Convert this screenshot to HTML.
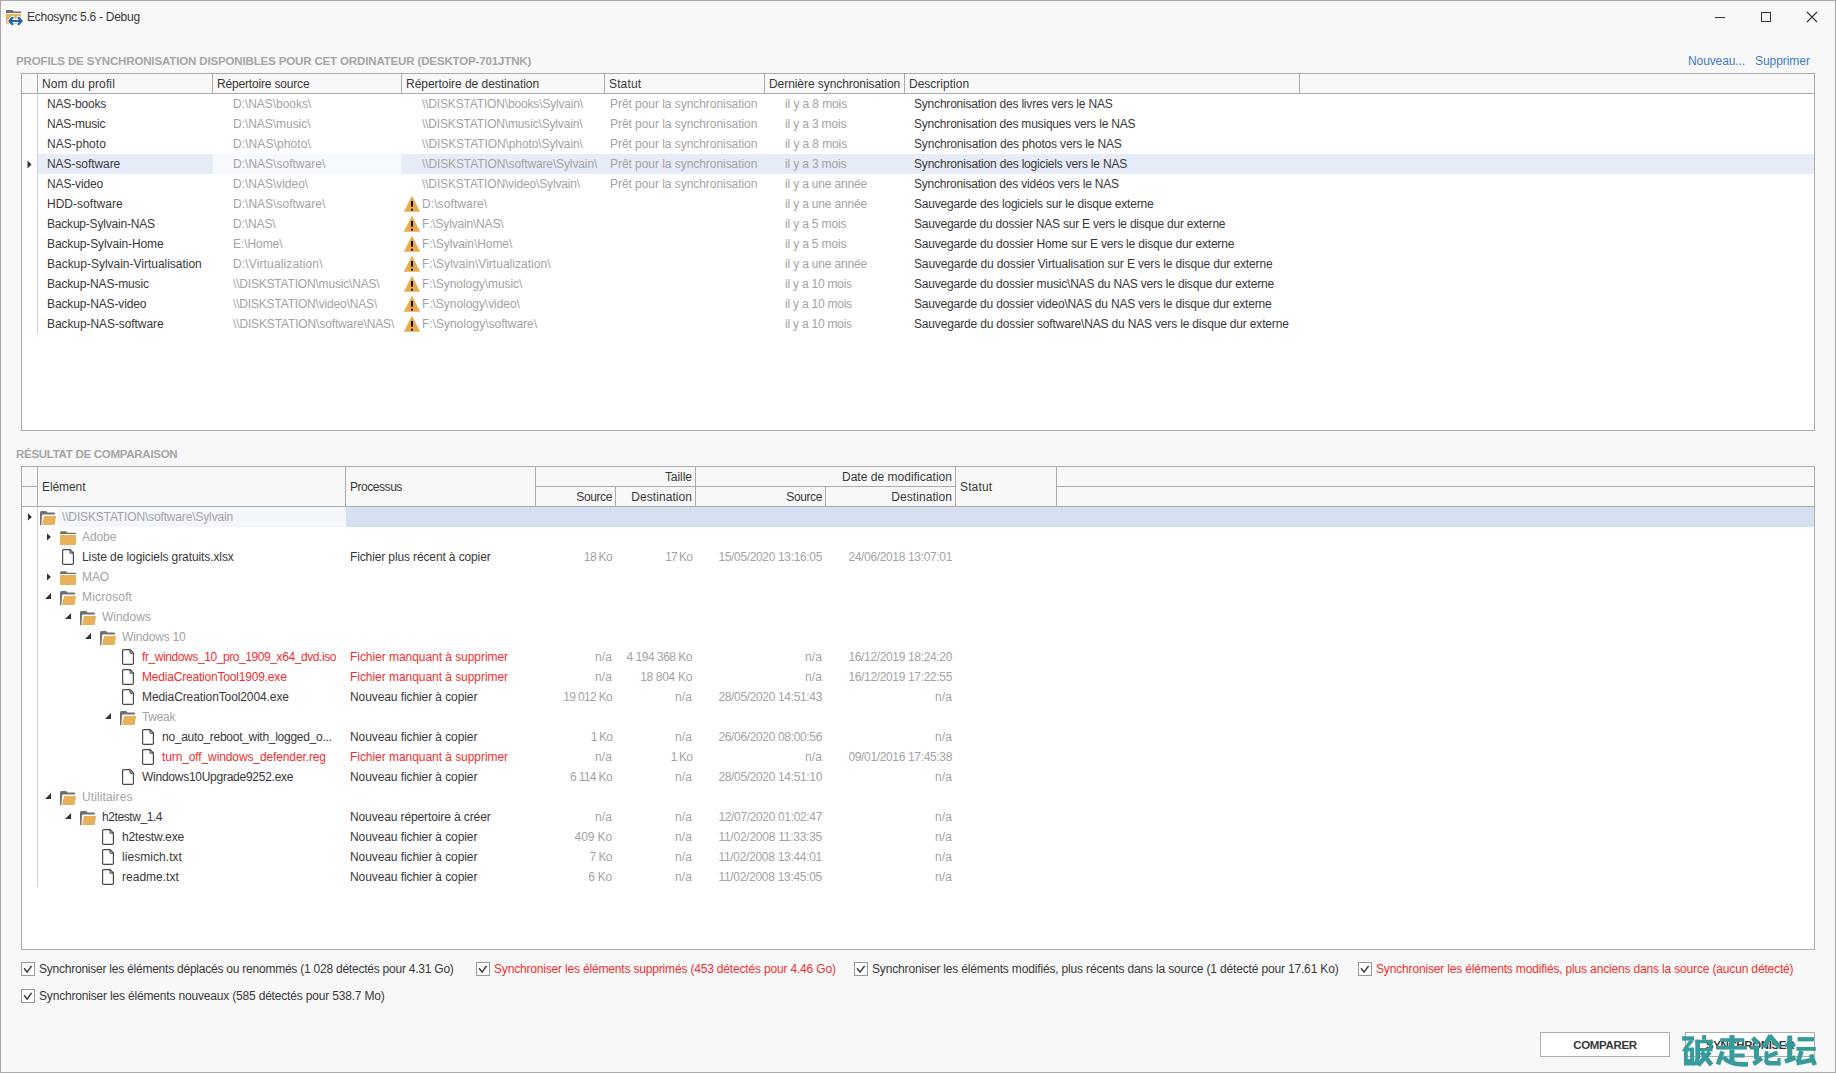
<!DOCTYPE html><html><head><meta charset="utf-8"><title>Echosync</title><style>
*{margin:0;padding:0;box-sizing:border-box}
html,body{width:1836px;height:1073px;overflow:hidden;background:#f8f8f8}
body{position:relative;font-family:"Liberation Sans",sans-serif;font-size:12px;color:#383838;letter-spacing:-0.2px}
.a{position:absolute}
.t{position:absolute;white-space:nowrap;line-height:20px;height:20px}
.g{color:#a3a3a3}
.r{color:#ef2f2f}
.hl{position:absolute;background:#a0a0a0}
.sec{position:absolute;white-space:nowrap;line-height:20px;font-size:11.5px;font-weight:bold;color:#a5a5a5;letter-spacing:-0.14px}
.lnk{color:#3d7cc9}
.rt{text-align:right}
</style></head><body><div class="a" style="left:0px;top:0px;width:1836px;height:1073px;border:1px solid #a8a8a8"></div>
<svg class="a" style="left:6px;top:9px" width="18" height="18" viewBox="0 0 18 18">
<path d="M0 1.6 Q0 1 0.8 1 H6.3 L7.6 2.6 H15 V4 H0z" fill="#6e6e6e"/>
<path d="M0 5 H15 V15 H2 Q0 15 0 13z" fill="#e9b05a"/>
<path d="M6.4 8.9 L3.4 12 L6.4 15.1 M12.6 8.9 L15.6 12 L12.6 15.1 M3.5 12 H15.5" fill="none" stroke="#fff" stroke-width="4" stroke-linecap="round" stroke-linejoin="round"/>
<path d="M6.4 8.9 L3.4 12 L6.4 15.1 M12.6 8.9 L15.6 12 L12.6 15.1" fill="none" stroke="#2063b0" stroke-width="2.3" stroke-linecap="round" stroke-linejoin="round"/>
<path d="M4 12 H15" stroke="#2063b0" stroke-width="2"/>
</svg>
<div class="t " style="left:27px;top:7px;letter-spacing:-0.264px;">Echosync 5.6 - Debug</div>
<svg class="a" style="left:1700px;top:0" width="136" height="40">
    <rect x="15" y="17" width="10" height="1" fill="#333"/>
    <rect x="61.5" y="12.5" width="9" height="9" fill="none" stroke="#333" stroke-width="1"/>
    <path d="M107 12 L117 22 M117 12 L107 22" stroke="#333" stroke-width="1.1"/>
    </svg>
<div class="sec" style="left:16px;top:51px">PROFILS DE SYNCHRONISATION DISPONIBLES POUR CET ORDINATEUR (DESKTOP-701JTNK)</div>
<div class="t lnk" style="left:1688px;top:51px;letter-spacing:-0.105px;">Nouveau...</div>
<div class="t lnk" style="left:1755px;top:51px;letter-spacing:-0.053px;">Supprimer</div>
<div class="a" style="left:21px;top:73px;width:1794px;height:358px;background:#fff;border:1px solid #ababab"></div>
<div class="a" style="left:22px;top:74px;width:1792px;height:19px;background:#f8f8f8"></div>
<div class="a" style="left:21px;top:93px;width:1794px;height:1px;background:#ababab"></div>
<div class="a" style="left:37px;top:74px;width:1px;height:19px;background:#ababab"></div>
<div class="a" style="left:212px;top:74px;width:1px;height:19px;background:#ababab"></div>
<div class="a" style="left:401px;top:74px;width:1px;height:19px;background:#ababab"></div>
<div class="a" style="left:604px;top:74px;width:1px;height:19px;background:#ababab"></div>
<div class="a" style="left:764px;top:74px;width:1px;height:19px;background:#ababab"></div>
<div class="a" style="left:904px;top:74px;width:1px;height:19px;background:#ababab"></div>
<div class="a" style="left:1299px;top:74px;width:1px;height:19px;background:#ababab"></div>
<div class="t " style="left:42px;top:74px;letter-spacing:0.122px;">Nom du profil</div>
<div class="t " style="left:217px;top:74px;letter-spacing:-0.175px;">Répertoire source</div>
<div class="t " style="left:406px;top:74px;letter-spacing:-0.038px;">Répertoire de destination</div>
<div class="t " style="left:609px;top:74px;letter-spacing:0.142px;">Statut</div>
<div class="t " style="left:769px;top:74px;letter-spacing:-0.066px;">Dernière synchronisation</div>
<div class="t " style="left:909px;top:74px;letter-spacing:0.007px;">Description</div>
<div class="t " style="left:47px;top:94px;letter-spacing:-0.181px;">NAS-books</div>
<div class="t g" style="left:233px;top:94px;width:162px;overflow:hidden;letter-spacing:-0.044px;">D:\NAS\books\</div>
<div class="t g" style="left:422px;top:94px;letter-spacing:-0.163px;">\\DISKSTATION\books\Sylvain\</div>
<div class="t g" style="left:610px;top:94px;letter-spacing:-0.049px;">Prêt pour la synchronisation</div>
<div class="t g" style="left:785px;top:94px;letter-spacing:-0.097px;">il y a 8 mois</div>
<div class="t " style="left:914px;top:94px;letter-spacing:-0.200px;">Synchronisation des livres vers le NAS</div>
<div class="t " style="left:47px;top:114px;letter-spacing:-0.176px;">NAS-music</div>
<div class="t g" style="left:233px;top:114px;width:162px;overflow:hidden;letter-spacing:-0.039px;">D:\NAS\music\</div>
<div class="t g" style="left:422px;top:114px;letter-spacing:-0.161px;">\\DISKSTATION\music\Sylvain\</div>
<div class="t g" style="left:610px;top:114px;letter-spacing:-0.049px;">Prêt pour la synchronisation</div>
<div class="t g" style="left:785px;top:114px;letter-spacing:-0.160px;">il y a 3 mois</div>
<div class="t " style="left:914px;top:114px;letter-spacing:-0.202px;">Synchronisation des musiques vers le NAS</div>
<div class="t " style="left:47px;top:134px;letter-spacing:0.014px;">NAS-photo</div>
<div class="t g" style="left:233px;top:134px;width:162px;overflow:hidden;letter-spacing:0.087px;">D:\NAS\photo\</div>
<div class="t g" style="left:422px;top:134px;letter-spacing:-0.102px;">\\DISKSTATION\photo\Sylvain\</div>
<div class="t g" style="left:610px;top:134px;letter-spacing:-0.049px;">Prêt pour la synchronisation</div>
<div class="t g" style="left:785px;top:134px;letter-spacing:-0.097px;">il y a 8 mois</div>
<div class="t " style="left:914px;top:134px;letter-spacing:-0.173px;">Synchronisation des photos vers le NAS</div>
<div class="a" style="left:38px;top:154px;width:175px;height:20px;background:#e6edf8"></div>
<div class="a" style="left:213px;top:154px;width:188px;height:20px;background:#f6f9fd"></div>
<div class="a" style="left:401px;top:154px;width:1413px;height:20px;background:#e6edf8"></div>
<svg class="a" style="left:27px;top:160px" width="6" height="9"><path d="M0.5 0.5 L4.5 4.5 L0.5 8.5z" fill="#333"/></svg>
<div class="t " style="left:47px;top:154px;letter-spacing:-0.069px;">NAS-software</div>
<div class="t g" style="left:233px;top:154px;width:162px;overflow:hidden;letter-spacing:0.014px;">D:\NAS\software\</div>
<div class="t g" style="left:422px;top:154px;letter-spacing:-0.122px;">\\DISKSTATION\software\Sylvain\</div>
<div class="t g" style="left:610px;top:154px;letter-spacing:-0.049px;">Prêt pour la synchronisation</div>
<div class="t g" style="left:785px;top:154px;letter-spacing:-0.160px;">il y a 3 mois</div>
<div class="t " style="left:914px;top:154px;letter-spacing:-0.188px;">Synchronisation des logiciels vers le NAS</div>
<div class="t " style="left:47px;top:174px;letter-spacing:-0.145px;">NAS-video</div>
<div class="t g" style="left:233px;top:174px;width:162px;overflow:hidden;letter-spacing:-0.020px;">D:\NAS\video\</div>
<div class="t g" style="left:422px;top:174px;letter-spacing:-0.152px;">\\DISKSTATION\video\Sylvain\</div>
<div class="t g" style="left:610px;top:174px;letter-spacing:-0.049px;">Prêt pour la synchronisation</div>
<div class="t g" style="left:785px;top:174px;letter-spacing:-0.175px;">il y a une année</div>
<div class="t " style="left:914px;top:174px;letter-spacing:-0.209px;">Synchronisation des vidéos vers le NAS</div>
<div class="t " style="left:47px;top:194px;letter-spacing:0.021px;">HDD-software</div>
<div class="t g" style="left:233px;top:194px;width:162px;overflow:hidden;letter-spacing:0.014px;">D:\NAS\software\</div>
<svg class="a" style="left:404px;top:196px" width="16" height="16" viewBox="0 0 16 16"><path d="M8 0.3 L15.8 15.6 L0.2 15.6z" fill="#e8ac4e" stroke="#e8ac4e" stroke-width="0.6" stroke-linejoin="round"/><rect x="7" y="5" width="2" height="5.6" fill="#111"/><rect x="7" y="12.8" width="2" height="1.8" fill="#111"/></svg>
<div class="t g" style="left:422px;top:194px;letter-spacing:0.096px;">D:\software\</div>
<div class="t g" style="left:785px;top:194px;letter-spacing:-0.175px;">il y a une année</div>
<div class="t " style="left:914px;top:194px;letter-spacing:-0.188px;">Sauvegarde des logiciels sur le disque externe</div>
<div class="t " style="left:47px;top:214px;letter-spacing:-0.200px;">Backup-Sylvain-NAS</div>
<div class="t g" style="left:233px;top:214px;width:162px;overflow:hidden;letter-spacing:-0.117px;">D:\NAS\</div>
<svg class="a" style="left:404px;top:216px" width="16" height="16" viewBox="0 0 16 16"><path d="M8 0.3 L15.8 15.6 L0.2 15.6z" fill="#e8ac4e" stroke="#e8ac4e" stroke-width="0.6" stroke-linejoin="round"/><rect x="7" y="5" width="2" height="5.6" fill="#111"/><rect x="7" y="12.8" width="2" height="1.8" fill="#111"/></svg>
<div class="t g" style="left:422px;top:214px;letter-spacing:-0.172px;">F:\Sylvain\NAS\</div>
<div class="t g" style="left:785px;top:214px;letter-spacing:-0.162px;">il y a 5 mois</div>
<div class="t " style="left:914px;top:214px;letter-spacing:-0.222px;">Sauvegarde du dossier NAS sur E vers le disque dur externe</div>
<div class="t " style="left:47px;top:234px;letter-spacing:-0.113px;">Backup-Sylvain-Home</div>
<div class="t g" style="left:233px;top:234px;width:162px;overflow:hidden;letter-spacing:-0.064px;">E:\Home\</div>
<svg class="a" style="left:404px;top:236px" width="16" height="16" viewBox="0 0 16 16"><path d="M8 0.3 L15.8 15.6 L0.2 15.6z" fill="#e8ac4e" stroke="#e8ac4e" stroke-width="0.6" stroke-linejoin="round"/><rect x="7" y="5" width="2" height="5.6" fill="#111"/><rect x="7" y="12.8" width="2" height="1.8" fill="#111"/></svg>
<div class="t g" style="left:422px;top:234px;letter-spacing:-0.073px;">F:\Sylvain\Home\</div>
<div class="t g" style="left:785px;top:234px;letter-spacing:-0.162px;">il y a 5 mois</div>
<div class="t " style="left:914px;top:234px;letter-spacing:-0.193px;">Sauvegarde du dossier Home sur E vers le disque dur externe</div>
<div class="t " style="left:47px;top:254px;letter-spacing:-0.014px;">Backup-Sylvain-Virtualisation</div>
<div class="t g" style="left:233px;top:254px;width:162px;overflow:hidden;letter-spacing:0.138px;">D:\Virtualization\</div>
<svg class="a" style="left:404px;top:256px" width="16" height="16" viewBox="0 0 16 16"><path d="M8 0.3 L15.8 15.6 L0.2 15.6z" fill="#e8ac4e" stroke="#e8ac4e" stroke-width="0.6" stroke-linejoin="round"/><rect x="7" y="5" width="2" height="5.6" fill="#111"/><rect x="7" y="12.8" width="2" height="1.8" fill="#111"/></svg>
<div class="t g" style="left:422px;top:254px;letter-spacing:0.028px;">F:\Sylvain\Virtualization\</div>
<div class="t g" style="left:785px;top:254px;letter-spacing:-0.175px;">il y a une année</div>
<div class="t " style="left:914px;top:254px;letter-spacing:-0.138px;">Sauvegarde du dossier Virtualisation sur E vers le disque dur externe</div>
<div class="t " style="left:47px;top:274px;letter-spacing:-0.140px;">Backup-NAS-music</div>
<div class="t g" style="left:233px;top:274px;width:162px;overflow:hidden;letter-spacing:-0.187px;">\\DISKSTATION\music\NAS\</div>
<svg class="a" style="left:404px;top:276px" width="16" height="16" viewBox="0 0 16 16"><path d="M8 0.3 L15.8 15.6 L0.2 15.6z" fill="#e8ac4e" stroke="#e8ac4e" stroke-width="0.6" stroke-linejoin="round"/><rect x="7" y="5" width="2" height="5.6" fill="#111"/><rect x="7" y="12.8" width="2" height="1.8" fill="#111"/></svg>
<div class="t g" style="left:422px;top:274px;letter-spacing:-0.060px;">F:\Synology\music\</div>
<div class="t g" style="left:785px;top:274px;letter-spacing:-0.225px;">il y a 10 mois</div>
<div class="t " style="left:914px;top:274px;letter-spacing:-0.189px;">Sauvegarde du dossier music\NAS du NAS vers le disque dur externe</div>
<div class="t " style="left:47px;top:294px;letter-spacing:-0.123px;">Backup-NAS-video</div>
<div class="t g" style="left:233px;top:294px;width:162px;overflow:hidden;letter-spacing:-0.176px;">\\DISKSTATION\video\NAS\</div>
<svg class="a" style="left:404px;top:296px" width="16" height="16" viewBox="0 0 16 16"><path d="M8 0.3 L15.8 15.6 L0.2 15.6z" fill="#e8ac4e" stroke="#e8ac4e" stroke-width="0.6" stroke-linejoin="round"/><rect x="7" y="5" width="2" height="5.6" fill="#111"/><rect x="7" y="12.8" width="2" height="1.8" fill="#111"/></svg>
<div class="t g" style="left:422px;top:294px;letter-spacing:-0.045px;">F:\Synology\video\</div>
<div class="t g" style="left:785px;top:294px;letter-spacing:-0.225px;">il y a 10 mois</div>
<div class="t " style="left:914px;top:294px;letter-spacing:-0.185px;">Sauvegarde du dossier video\NAS du NAS vers le disque dur externe</div>
<div class="t " style="left:47px;top:314px;letter-spacing:-0.078px;">Backup-NAS-software</div>
<div class="t g" style="left:233px;top:314px;width:162px;overflow:hidden;letter-spacing:-0.139px;">\\DISKSTATION\software\NAS\</div>
<svg class="a" style="left:404px;top:316px" width="16" height="16" viewBox="0 0 16 16"><path d="M8 0.3 L15.8 15.6 L0.2 15.6z" fill="#e8ac4e" stroke="#e8ac4e" stroke-width="0.6" stroke-linejoin="round"/><rect x="7" y="5" width="2" height="5.6" fill="#111"/><rect x="7" y="12.8" width="2" height="1.8" fill="#111"/></svg>
<div class="t g" style="left:422px;top:314px;letter-spacing:-0.017px;">F:\Synology\software\</div>
<div class="t g" style="left:785px;top:314px;letter-spacing:-0.225px;">il y a 10 mois</div>
<div class="t " style="left:914px;top:314px;letter-spacing:-0.170px;">Sauvegarde du dossier software\NAS du NAS vers le disque dur externe</div>
<div class="a" style="left:37px;top:94px;width:1px;height:240px;background:#d4d4d4"></div>
<div class="sec" style="left:16px;top:444px;letter-spacing:-0.28px">RÉSULTAT DE COMPARAISON</div>
<div class="a" style="left:21px;top:466px;width:1794px;height:484px;background:#fff;border:1px solid #ababab"></div>
<div class="a" style="left:22px;top:467px;width:1792px;height:39px;background:#f8f8f8"></div>
<div class="a" style="left:21px;top:506px;width:1794px;height:1px;background:#ababab"></div>
<div class="a" style="left:37px;top:467px;width:1px;height:39px;background:#ababab"></div>
<div class="a" style="left:345px;top:467px;width:1px;height:39px;background:#ababab"></div>
<div class="a" style="left:535px;top:467px;width:1px;height:39px;background:#ababab"></div>
<div class="a" style="left:695px;top:467px;width:1px;height:39px;background:#ababab"></div>
<div class="a" style="left:955px;top:467px;width:1px;height:39px;background:#ababab"></div>
<div class="a" style="left:1056px;top:467px;width:1px;height:39px;background:#ababab"></div>
<div class="a" style="left:615px;top:487px;width:1px;height:19px;background:#ababab"></div>
<div class="a" style="left:825px;top:487px;width:1px;height:19px;background:#ababab"></div>
<div class="a" style="left:22px;top:486px;width:15px;height:1px;background:#ababab"></div>
<div class="a" style="left:535px;top:486px;width:421px;height:1px;background:#ababab"></div>
<div class="a" style="left:1056px;top:486px;width:759px;height:1px;background:#ababab"></div>
<div class="t " style="left:42px;top:477px;letter-spacing:-0.090px;">Elément</div>
<div class="t " style="left:350px;top:477px;letter-spacing:-0.458px;">Processus</div>
<div class="t " style="left:960px;top:477px;letter-spacing:0.142px;">Statut</div>
<div class="t rt " style="left:392px;width:300px;top:467px;letter-spacing:-0.040px;">Taille</div>
<div class="t rt " style="left:652px;width:300px;top:467px;letter-spacing:0.032px;">Date de modification</div>
<div class="t rt " style="left:312px;width:300px;top:487px;letter-spacing:-0.387px;">Source</div>
<div class="t rt " style="left:392px;width:300px;top:487px;letter-spacing:0.066px;">Destination</div>
<div class="t rt " style="left:522px;width:300px;top:487px;letter-spacing:-0.387px;">Source</div>
<div class="t rt " style="left:652px;width:300px;top:487px;letter-spacing:0.066px;">Destination</div>
<div class="a" style="left:58px;top:507px;width:288px;height:20px;background:#f3f6fb"></div>
<div class="a" style="left:346px;top:507px;width:1468px;height:20px;background:#d5e0f2"></div>
<svg class="a" style="left:28px;top:513px" width="5" height="9"><path d="M0 0.2 L3.9 3.9 L0 7.6z" fill="#333"/></svg>
<svg class="a" style="left:40px;top:511px" width="17" height="15" viewBox="0 0 17 15"><path d="M0 1.6 Q0 0 1.6 0 H6 L7.6 1.6 H14.2 Q15 1.6 15 2.5 V3.6 H3 Q2.2 3.6 2.1 4.5 L1.3 14.2 H0 z" fill="#707070"/><path d="M3.9 5 H16 L14.7 14 H2 z" fill="#e9b05a"/></svg>
<div class="t g" style="left:62px;top:507px;letter-spacing:-0.152px;">\\DISKSTATION\software\Sylvain</div>
<svg class="a" style="left:47px;top:533px" width="5" height="9"><path d="M0 0.2 L3.9 3.9 L0 7.6z" fill="#333"/></svg>
<svg class="a" style="left:60px;top:531px" width="17" height="15" viewBox="0 0 17 15"><path d="M0 2 Q0 0.3 1.5 0.3 H6 L7.5 1.7 H16 V3 H0z" fill="#707070"/><path d="M0 4 H16 V13.2 Q16 14 15.2 14 H1 Q0 14 0 13z" fill="#e9b05a"/></svg>
<div class="t g" style="left:82px;top:527px;letter-spacing:-0.093px;">Adobe</div>
<svg class="a" style="left:62px;top:549px" width="12" height="16" viewBox="0 0 12 16"><path d="M0.6 1.8 Q0.6 0.6 1.8 0.6 H8.2 L11.4 3.9 V14.2 Q11.4 15.4 10.2 15.4 H1.8 Q0.6 15.4 0.6 14.2 Z" fill="#fff" stroke="#4a4a4a" stroke-width="1.2"/><path d="M8 0.8 V3 Q8 4.1 9.1 4.1 H11.2" fill="none" stroke="#4a4a4a" stroke-width="1.2"/></svg>
<div class="t " style="left:82px;top:547px;letter-spacing:-0.093px;">Liste de logiciels gratuits.xlsx</div>
<div class="t " style="left:350px;top:547px;letter-spacing:-0.125px;">Fichier plus récent à copier</div>
<div class="t rt g" style="left:312px;width:300px;top:547px;letter-spacing:-0.646px;">18 Ko</div>
<div class="t rt g" style="left:392px;width:300px;top:547px;letter-spacing:-0.897px;">17 Ko</div>
<div class="t rt g" style="left:522px;width:300px;top:547px;letter-spacing:-0.343px;">15/05/2020 13:16:05</div>
<div class="t rt g" style="left:652px;width:300px;top:547px;letter-spacing:-0.343px;">24/06/2018 13:07:01</div>
<svg class="a" style="left:47px;top:573px" width="5" height="9"><path d="M0 0.2 L3.9 3.9 L0 7.6z" fill="#333"/></svg>
<svg class="a" style="left:60px;top:571px" width="17" height="15" viewBox="0 0 17 15"><path d="M0 2 Q0 0.3 1.5 0.3 H6 L7.5 1.7 H16 V3 H0z" fill="#707070"/><path d="M0 4 H16 V13.2 Q16 14 15.2 14 H1 Q0 14 0 13z" fill="#e9b05a"/></svg>
<div class="t g" style="left:82px;top:567px;letter-spacing:-0.107px;">MAO</div>
<svg class="a" style="left:45px;top:593px" width="7" height="7"><path d="M6 0 V6 H0z" fill="#333"/></svg>
<svg class="a" style="left:60px;top:591px" width="17" height="15" viewBox="0 0 17 15"><path d="M0 1.6 Q0 0 1.6 0 H6 L7.6 1.6 H14.2 Q15 1.6 15 2.5 V3.6 H3 Q2.2 3.6 2.1 4.5 L1.3 14.2 H0 z" fill="#707070"/><path d="M3.9 5 H16 L14.7 14 H2 z" fill="#e9b05a"/></svg>
<div class="t g" style="left:82px;top:587px;letter-spacing:0.160px;">Microsoft</div>
<svg class="a" style="left:65px;top:613px" width="7" height="7"><path d="M6 0 V6 H0z" fill="#333"/></svg>
<svg class="a" style="left:80px;top:611px" width="17" height="15" viewBox="0 0 17 15"><path d="M0 1.6 Q0 0 1.6 0 H6 L7.6 1.6 H14.2 Q15 1.6 15 2.5 V3.6 H3 Q2.2 3.6 2.1 4.5 L1.3 14.2 H0 z" fill="#707070"/><path d="M3.9 5 H16 L14.7 14 H2 z" fill="#e9b05a"/></svg>
<div class="t g" style="left:102px;top:607px;letter-spacing:0.036px;">Windows</div>
<svg class="a" style="left:85px;top:633px" width="7" height="7"><path d="M6 0 V6 H0z" fill="#333"/></svg>
<svg class="a" style="left:100px;top:631px" width="17" height="15" viewBox="0 0 17 15"><path d="M0 1.6 Q0 0 1.6 0 H6 L7.6 1.6 H14.2 Q15 1.6 15 2.5 V3.6 H3 Q2.2 3.6 2.1 4.5 L1.3 14.2 H0 z" fill="#707070"/><path d="M3.9 5 H16 L14.7 14 H2 z" fill="#e9b05a"/></svg>
<div class="t g" style="left:122px;top:627px;letter-spacing:-0.174px;">Windows 10</div>
<svg class="a" style="left:122px;top:649px" width="12" height="16" viewBox="0 0 12 16"><path d="M0.6 1.8 Q0.6 0.6 1.8 0.6 H8.2 L11.4 3.9 V14.2 Q11.4 15.4 10.2 15.4 H1.8 Q0.6 15.4 0.6 14.2 Z" fill="#fff" stroke="#4a4a4a" stroke-width="1.2"/><path d="M8 0.8 V3 Q8 4.1 9.1 4.1 H11.2" fill="none" stroke="#4a4a4a" stroke-width="1.2"/></svg>
<div class="t r" style="left:142px;top:647px;letter-spacing:-0.414px;">fr_windows_10_pro_1909_x64_dvd.iso</div>
<div class="t r" style="left:350px;top:647px;letter-spacing:-0.048px;">Fichier manquant à supprimer</div>
<div class="t rt g" style="left:312px;width:300px;top:647px;letter-spacing:0.113px;">n/a</div>
<div class="t rt g" style="left:392px;width:300px;top:647px;letter-spacing:-0.501px;">4 194 368 Ko</div>
<div class="t rt g" style="left:522px;width:300px;top:647px;letter-spacing:0.113px;">n/a</div>
<div class="t rt g" style="left:652px;width:300px;top:647px;letter-spacing:-0.343px;">16/12/2019 18:24:20</div>
<svg class="a" style="left:122px;top:669px" width="12" height="16" viewBox="0 0 12 16"><path d="M0.6 1.8 Q0.6 0.6 1.8 0.6 H8.2 L11.4 3.9 V14.2 Q11.4 15.4 10.2 15.4 H1.8 Q0.6 15.4 0.6 14.2 Z" fill="#fff" stroke="#4a4a4a" stroke-width="1.2"/><path d="M8 0.8 V3 Q8 4.1 9.1 4.1 H11.2" fill="none" stroke="#4a4a4a" stroke-width="1.2"/></svg>
<div class="t r" style="left:142px;top:667px;letter-spacing:-0.193px;">MediaCreationTool1909.exe</div>
<div class="t r" style="left:350px;top:667px;letter-spacing:-0.048px;">Fichier manquant à supprimer</div>
<div class="t rt g" style="left:312px;width:300px;top:667px;letter-spacing:0.113px;">n/a</div>
<div class="t rt g" style="left:392px;width:300px;top:667px;letter-spacing:-0.316px;">18 804 Ko</div>
<div class="t rt g" style="left:522px;width:300px;top:667px;letter-spacing:0.113px;">n/a</div>
<div class="t rt g" style="left:652px;width:300px;top:667px;letter-spacing:-0.343px;">16/12/2019 17:22:55</div>
<svg class="a" style="left:122px;top:689px" width="12" height="16" viewBox="0 0 12 16"><path d="M0.6 1.8 Q0.6 0.6 1.8 0.6 H8.2 L11.4 3.9 V14.2 Q11.4 15.4 10.2 15.4 H1.8 Q0.6 15.4 0.6 14.2 Z" fill="#fff" stroke="#4a4a4a" stroke-width="1.2"/><path d="M8 0.8 V3 Q8 4.1 9.1 4.1 H11.2" fill="none" stroke="#4a4a4a" stroke-width="1.2"/></svg>
<div class="t " style="left:142px;top:687px;letter-spacing:-0.103px;">MediaCreationTool2004.exe</div>
<div class="t " style="left:350px;top:687px;letter-spacing:-0.087px;">Nouveau fichier à copier</div>
<div class="t rt g" style="left:312px;width:300px;top:687px;letter-spacing:-0.666px;">19 012 Ko</div>
<div class="t rt g" style="left:392px;width:300px;top:687px;letter-spacing:0.113px;">n/a</div>
<div class="t rt g" style="left:522px;width:300px;top:687px;letter-spacing:-0.343px;">28/05/2020 14:51:43</div>
<div class="t rt g" style="left:652px;width:300px;top:687px;letter-spacing:0.113px;">n/a</div>
<svg class="a" style="left:105px;top:713px" width="7" height="7"><path d="M6 0 V6 H0z" fill="#333"/></svg>
<svg class="a" style="left:120px;top:711px" width="17" height="15" viewBox="0 0 17 15"><path d="M0 1.6 Q0 0 1.6 0 H6 L7.6 1.6 H14.2 Q15 1.6 15 2.5 V3.6 H3 Q2.2 3.6 2.1 4.5 L1.3 14.2 H0 z" fill="#707070"/><path d="M3.9 5 H16 L14.7 14 H2 z" fill="#e9b05a"/></svg>
<div class="t g" style="left:142px;top:707px;letter-spacing:-0.310px;">Tweak</div>
<svg class="a" style="left:142px;top:729px" width="12" height="16" viewBox="0 0 12 16"><path d="M0.6 1.8 Q0.6 0.6 1.8 0.6 H8.2 L11.4 3.9 V14.2 Q11.4 15.4 10.2 15.4 H1.8 Q0.6 15.4 0.6 14.2 Z" fill="#fff" stroke="#4a4a4a" stroke-width="1.2"/><path d="M8 0.8 V3 Q8 4.1 9.1 4.1 H11.2" fill="none" stroke="#4a4a4a" stroke-width="1.2"/></svg>
<div class="t " style="left:162px;top:727px;letter-spacing:-0.277px;">no_auto_reboot_with_logged_o...</div>
<div class="t " style="left:350px;top:727px;letter-spacing:-0.087px;">Nouveau fichier à copier</div>
<div class="t rt g" style="left:312px;width:300px;top:727px;letter-spacing:-0.860px;">1 Ko</div>
<div class="t rt g" style="left:392px;width:300px;top:727px;letter-spacing:0.113px;">n/a</div>
<div class="t rt g" style="left:522px;width:300px;top:727px;letter-spacing:-0.343px;">26/06/2020 08:00:56</div>
<div class="t rt g" style="left:652px;width:300px;top:727px;letter-spacing:0.113px;">n/a</div>
<svg class="a" style="left:142px;top:749px" width="12" height="16" viewBox="0 0 12 16"><path d="M0.6 1.8 Q0.6 0.6 1.8 0.6 H8.2 L11.4 3.9 V14.2 Q11.4 15.4 10.2 15.4 H1.8 Q0.6 15.4 0.6 14.2 Z" fill="#fff" stroke="#4a4a4a" stroke-width="1.2"/><path d="M8 0.8 V3 Q8 4.1 9.1 4.1 H11.2" fill="none" stroke="#4a4a4a" stroke-width="1.2"/></svg>
<div class="t r" style="left:162px;top:747px;letter-spacing:-0.115px;">turn_off_windows_defender.reg</div>
<div class="t r" style="left:350px;top:747px;letter-spacing:-0.048px;">Fichier manquant à supprimer</div>
<div class="t rt g" style="left:312px;width:300px;top:747px;letter-spacing:0.113px;">n/a</div>
<div class="t rt g" style="left:392px;width:300px;top:747px;letter-spacing:-0.860px;">1 Ko</div>
<div class="t rt g" style="left:522px;width:300px;top:747px;letter-spacing:0.113px;">n/a</div>
<div class="t rt g" style="left:652px;width:300px;top:747px;letter-spacing:-0.343px;">09/01/2016 17:45:38</div>
<svg class="a" style="left:122px;top:769px" width="12" height="16" viewBox="0 0 12 16"><path d="M0.6 1.8 Q0.6 0.6 1.8 0.6 H8.2 L11.4 3.9 V14.2 Q11.4 15.4 10.2 15.4 H1.8 Q0.6 15.4 0.6 14.2 Z" fill="#fff" stroke="#4a4a4a" stroke-width="1.2"/><path d="M8 0.8 V3 Q8 4.1 9.1 4.1 H11.2" fill="none" stroke="#4a4a4a" stroke-width="1.2"/></svg>
<div class="t " style="left:142px;top:767px;letter-spacing:-0.257px;">Windows10Upgrade9252.exe</div>
<div class="t " style="left:350px;top:767px;letter-spacing:-0.087px;">Nouveau fichier à copier</div>
<div class="t rt g" style="left:312px;width:300px;top:767px;letter-spacing:-0.637px;">6 114 Ko</div>
<div class="t rt g" style="left:392px;width:300px;top:767px;letter-spacing:0.113px;">n/a</div>
<div class="t rt g" style="left:522px;width:300px;top:767px;letter-spacing:-0.343px;">28/05/2020 14:51:10</div>
<div class="t rt g" style="left:652px;width:300px;top:767px;letter-spacing:0.113px;">n/a</div>
<svg class="a" style="left:45px;top:793px" width="7" height="7"><path d="M6 0 V6 H0z" fill="#333"/></svg>
<svg class="a" style="left:60px;top:791px" width="17" height="15" viewBox="0 0 17 15"><path d="M0 1.6 Q0 0 1.6 0 H6 L7.6 1.6 H14.2 Q15 1.6 15 2.5 V3.6 H3 Q2.2 3.6 2.1 4.5 L1.3 14.2 H0 z" fill="#707070"/><path d="M3.9 5 H16 L14.7 14 H2 z" fill="#e9b05a"/></svg>
<div class="t g" style="left:82px;top:787px;letter-spacing:0.114px;">Utilitaires</div>
<svg class="a" style="left:65px;top:813px" width="7" height="7"><path d="M6 0 V6 H0z" fill="#333"/></svg>
<svg class="a" style="left:80px;top:811px" width="17" height="15" viewBox="0 0 17 15"><path d="M0 1.6 Q0 0 1.6 0 H6 L7.6 1.6 H14.2 Q15 1.6 15 2.5 V3.6 H3 Q2.2 3.6 2.1 4.5 L1.3 14.2 H0 z" fill="#707070"/><path d="M3.9 5 H16 L14.7 14 H2 z" fill="#e9b05a"/></svg>
<div class="t " style="left:102px;top:807px;letter-spacing:-0.424px;">h2testw_1.4</div>
<div class="t " style="left:350px;top:807px;letter-spacing:-0.108px;">Nouveau répertoire à créer</div>
<div class="t rt g" style="left:312px;width:300px;top:807px;letter-spacing:0.113px;">n/a</div>
<div class="t rt g" style="left:392px;width:300px;top:807px;letter-spacing:0.113px;">n/a</div>
<div class="t rt g" style="left:522px;width:300px;top:807px;letter-spacing:-0.343px;">12/07/2020 01:02:47</div>
<div class="t rt g" style="left:652px;width:300px;top:807px;letter-spacing:0.113px;">n/a</div>
<svg class="a" style="left:102px;top:829px" width="12" height="16" viewBox="0 0 12 16"><path d="M0.6 1.8 Q0.6 0.6 1.8 0.6 H8.2 L11.4 3.9 V14.2 Q11.4 15.4 10.2 15.4 H1.8 Q0.6 15.4 0.6 14.2 Z" fill="#fff" stroke="#4a4a4a" stroke-width="1.2"/><path d="M8 0.8 V3 Q8 4.1 9.1 4.1 H11.2" fill="none" stroke="#4a4a4a" stroke-width="1.2"/></svg>
<div class="t " style="left:122px;top:827px;letter-spacing:-0.113px;">h2testw.exe</div>
<div class="t " style="left:350px;top:827px;letter-spacing:-0.087px;">Nouveau fichier à copier</div>
<div class="t rt g" style="left:312px;width:300px;top:827px;letter-spacing:-0.108px;">409 Ko</div>
<div class="t rt g" style="left:392px;width:300px;top:827px;letter-spacing:0.113px;">n/a</div>
<div class="t rt g" style="left:522px;width:300px;top:827px;letter-spacing:-0.249px;">11/02/2008 11:33:35</div>
<div class="t rt g" style="left:652px;width:300px;top:827px;letter-spacing:0.113px;">n/a</div>
<svg class="a" style="left:102px;top:849px" width="12" height="16" viewBox="0 0 12 16"><path d="M0.6 1.8 Q0.6 0.6 1.8 0.6 H8.2 L11.4 3.9 V14.2 Q11.4 15.4 10.2 15.4 H1.8 Q0.6 15.4 0.6 14.2 Z" fill="#fff" stroke="#4a4a4a" stroke-width="1.2"/><path d="M8 0.8 V3 Q8 4.1 9.1 4.1 H11.2" fill="none" stroke="#4a4a4a" stroke-width="1.2"/></svg>
<div class="t " style="left:122px;top:847px;letter-spacing:0.055px;">liesmich.txt</div>
<div class="t " style="left:350px;top:847px;letter-spacing:-0.087px;">Nouveau fichier à copier</div>
<div class="t rt g" style="left:312px;width:300px;top:847px;letter-spacing:-0.548px;">7 Ko</div>
<div class="t rt g" style="left:392px;width:300px;top:847px;letter-spacing:0.113px;">n/a</div>
<div class="t rt g" style="left:522px;width:300px;top:847px;letter-spacing:-0.296px;">11/02/2008 13:44:01</div>
<div class="t rt g" style="left:652px;width:300px;top:847px;letter-spacing:0.113px;">n/a</div>
<svg class="a" style="left:102px;top:869px" width="12" height="16" viewBox="0 0 12 16"><path d="M0.6 1.8 Q0.6 0.6 1.8 0.6 H8.2 L11.4 3.9 V14.2 Q11.4 15.4 10.2 15.4 H1.8 Q0.6 15.4 0.6 14.2 Z" fill="#fff" stroke="#4a4a4a" stroke-width="1.2"/><path d="M8 0.8 V3 Q8 4.1 9.1 4.1 H11.2" fill="none" stroke="#4a4a4a" stroke-width="1.2"/></svg>
<div class="t " style="left:122px;top:867px;letter-spacing:0.013px;">readme.txt</div>
<div class="t " style="left:350px;top:867px;letter-spacing:-0.087px;">Nouveau fichier à copier</div>
<div class="t rt g" style="left:312px;width:300px;top:867px;letter-spacing:-0.264px;">6 Ko</div>
<div class="t rt g" style="left:392px;width:300px;top:867px;letter-spacing:0.113px;">n/a</div>
<div class="t rt g" style="left:522px;width:300px;top:867px;letter-spacing:-0.296px;">11/02/2008 13:45:05</div>
<div class="t rt g" style="left:652px;width:300px;top:867px;letter-spacing:0.113px;">n/a</div>
<div class="a" style="left:37px;top:507px;width:1px;height:380px;background:#d4d4d4"></div>
<svg class="a" style="left:21px;top:962px" width="14" height="14"><rect x="0.5" y="0.5" width="13" height="13" fill="#fff" stroke="#999"/><path d="M3.1 6.2 L6.1 10.1 L10.6 3.9" fill="none" stroke="#383838" stroke-width="1.5"/></svg>
<div class="t " style="left:39px;top:959px;letter-spacing:-0.232px;">Synchroniser les éléments déplacés ou renommés (1 028 détectés pour 4.31 Go)</div>
<svg class="a" style="left:476px;top:962px" width="14" height="14"><rect x="0.5" y="0.5" width="13" height="13" fill="#fff" stroke="#999"/><path d="M3.1 6.2 L6.1 10.1 L10.6 3.9" fill="none" stroke="#383838" stroke-width="1.5"/></svg>
<div class="t r" style="left:494px;top:959px;letter-spacing:-0.177px;">Synchroniser les éléments supprimés (453 détectés pour 4.46 Go)</div>
<svg class="a" style="left:854px;top:962px" width="14" height="14"><rect x="0.5" y="0.5" width="13" height="13" fill="#fff" stroke="#999"/><path d="M3.1 6.2 L6.1 10.1 L10.6 3.9" fill="none" stroke="#383838" stroke-width="1.5"/></svg>
<div class="t " style="left:872px;top:959px;letter-spacing:-0.162px;">Synchroniser les éléments modifiés, plus récents dans la source (1 détecté pour 17.61 Ko)</div>
<svg class="a" style="left:1358px;top:962px" width="14" height="14"><rect x="0.5" y="0.5" width="13" height="13" fill="#fff" stroke="#999"/><path d="M3.1 6.2 L6.1 10.1 L10.6 3.9" fill="none" stroke="#383838" stroke-width="1.5"/></svg>
<div class="t r" style="left:1376px;top:959px;letter-spacing:-0.162px;">Synchroniser les éléments modifiés, plus anciens dans la source (aucun détecté)</div>
<svg class="a" style="left:21px;top:989px" width="14" height="14"><rect x="0.5" y="0.5" width="13" height="13" fill="#fff" stroke="#999"/><path d="M3.1 6.2 L6.1 10.1 L10.6 3.9" fill="none" stroke="#383838" stroke-width="1.5"/></svg>
<div class="t " style="left:39px;top:986px;letter-spacing:-0.179px;">Synchroniser les éléments nouveaux (585 détectés pour 538.7 Mo)</div>
<div class="a" style="left:1540px;top:1032px;width:130px;height:25px;background:#fff;border:1px solid #adadad"></div>
<div class="t" style="left:1540px;top:1035px;width:130px;text-align:center;font-weight:bold;font-size:11.5px;letter-spacing:-0.37px">COMPARER</div>
<div class="a" style="left:1685px;top:1032px;width:130px;height:25px;background:#fff;border:1px solid #adadad"></div>
<div class="t" style="left:1685px;top:1035px;width:130px;text-align:center;font-weight:bold;font-size:11.5px;letter-spacing:-0.37px">SYNCHRONISER</div>
<svg class="a" style="left:1678px;top:1030px" width="144" height="42" viewBox="0 0 144 42"><g fill="#389b9b">
<rect x="4.1" y="6.3" width="12" height="4.3"/>
<polygon points="11,10.6 16,10.6 8.5,20 3.5,21.6"/>
<path fill-rule="evenodd" d="M5.9 17.6H16.1V35.5H5.9z M9.8 21.4V29H12V21.4z"/>
<polygon points="17.3,9.8 22,9.8 22,28 19.5,35.5 14.9,35.3 17.3,29"/>
<rect x="24.1" y="5.1" width="4.1" height="4.7"/>
<rect x="17.3" y="9.8" width="17.2" height="3.5"/>
<rect x="31" y="9.8" width="3.5" height="8.2"/>
<rect x="22" y="18" width="12.5" height="3.4"/>
<rect x="51.4" y="5.1" width="5.1" height="13.7"/>
<rect x="42.2" y="8.2" width="24.1" height="3.6"/>
<rect x="38.8" y="15.7" width="30.2" height="3.9"/>
<rect x="51.4" y="19.6" width="5.1" height="13.4"/>
<rect x="56.5" y="23.5" width="10.2" height="4"/>
<rect x="109.2" y="5.5" width="5.1" height="25.9"/>
<rect x="106.9" y="13.3" width="10.6" height="3.6"/>
<rect x="119.6" y="7.1" width="16.3" height="4.3"/>
<rect x="118.4" y="16.9" width="19.4" height="3.9"/>
<rect x="86.5" y="21.2" width="3.9" height="11"/>
<rect x="99.5" y="28" width="3" height="7.3"/>
<rect x="72.4" y="15.7" width="8.6" height="3.9"/>
<rect x="75.9" y="15.7" width="5.1" height="13.5"/>
</g><g fill="none" stroke="#389b9b" stroke-width="4.6">
<path d="M32 22 L20 35.3"/>
<path d="M23.5 22 L33.5 35"/>
<path d="M44.5 21.5 L40 34.5"/>
<path d="M45.5 27 Q51 35.2 70 34.3"/>
<path d="M74.5 8 L80.5 13.5"/>
<path d="M75.5 34 L84 28"/>
<path d="M92.5 5.5 L85.5 17.5"/>
<path d="M91.5 5.5 L101.5 17.5"/>
<path d="M88.4 30 Q88.4 33.2 91.5 33.2 H102.5"/>
<path d="M99.5 22.5 L90 26.5"/>
<path d="M107 31.5 L117.5 27.5"/>
<path d="M123.5 21 L120 32"/>
<path d="M118.5 33.3 L134 30"/>
<path d="M133 24.5 L136.8 35"/>
</g></svg></body></html>
